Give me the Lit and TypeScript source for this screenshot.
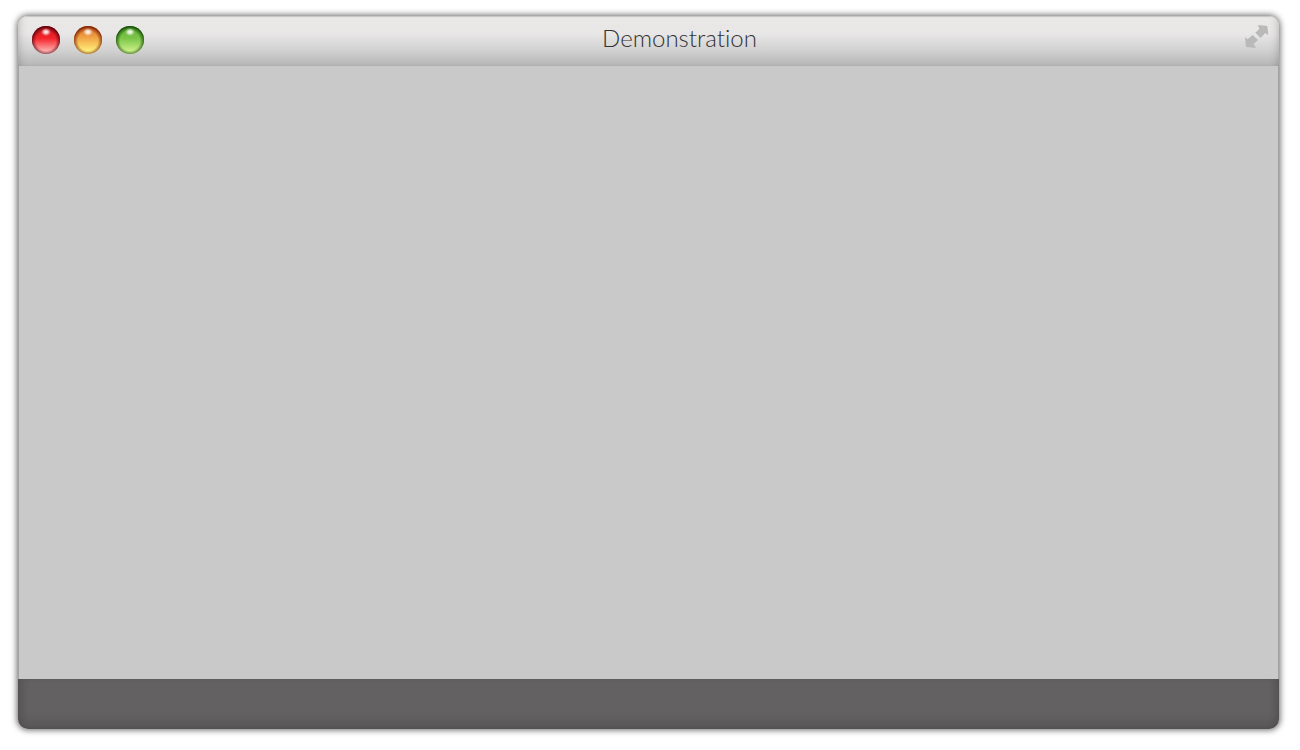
import { LitElement, html, css, svg } from "lit";
import { customElement } from "lit/decorators.js";

interface Orb {
  name: string;
  rim: string;
  top: string;
  middle: string;
  glow: string;
}

const orbs: Orb[] = [
  { name: "close", rim: "#4a0008", top: "#cc1420", middle: "#f5262c", glow: "#ffb0b0" },
  { name: "minimize", rim: "#6e1800", top: "#dc6a28", middle: "#f2a848", glow: "#fff07c" },
  { name: "zoom", rim: "#083c00", top: "#5fae30", middle: "#7cc64a", glow: "#ccf088" },
];

@customElement("app-root")
export class AppRoot extends LitElement {
  static styles = css`
    :host {
      display: block;
      box-sizing: border-box;
      height: 100vh;
      padding: 16px 21px 21px 18px;
      background: #fff;
      font-family: "Century Gothic", Lato, sans-serif;
    }
    .window {
      display: grid;
      grid-template-rows: 50px 1fr 50px;
      height: 100%;
      border-radius: 10px;
      overflow: hidden;
      background: #c9c9c9;
    }
    .frame {
      height: 100%;
      border-radius: 10px;
      box-shadow: 0 0 6px 1px rgba(0, 0, 0, 0.6);
    }
    .bar {
      display: flex;
      align-items: center;
      padding: 0 10px 0 13px;
      background: linear-gradient(#ebe9e7, #e8e6e6 36%, #d2d2d2 68%, #b5b5b5);
      box-shadow: inset 0 1px 1px #c4c4c4,
        inset 8px 0 10px -8px rgba(0, 0, 0, 0.25),
        inset -8px 0 10px -8px rgba(0, 0, 0, 0.25);
    }
    .controls {
      display: flex;
      gap: 12px;
      padding-bottom: 2px;
    }
    button {
      display: block;
      padding: 0;
      border: 0;
      background: none;
      cursor: pointer;
    }
    svg {
      display: block;
    }
    .title {
      flex: 1;
      margin: 0;
      padding: 0 30px 6px 0;
      text-align: center;
      font-size: 24px;
      line-height: 26px;
      font-weight: 300;
      font-variant-ligatures: none;
      color: #333;
    }
    .expand {
      margin-bottom: 10px;
    }
    .content {
      border: solid #a2a2a2;
      border-width: 0 1px;
    }
    .footer {
      background: #646162;
      box-shadow: inset 0 -8px 14px -4px rgba(0, 0, 0, 0.18),
        inset 8px 0 12px -8px rgba(0, 0, 0, 0.2),
        inset -8px 0 12px -8px rgba(0, 0, 0, 0.2);
    }
  `;

  private renderOrb(orb: Orb) {
    const id = orb.name;
    return html`<button type="button" aria-label=${id}>
      <svg width="30" height="30" viewBox="0 0 30 30">
        ${svg`
          <defs>
            <linearGradient id="body-${id}" x1="0" y1="0" x2="0" y2="1">
              <stop offset="0" stop-color=${orb.top}/>
              <stop offset=".45" stop-color=${orb.middle}/>
              <stop offset=".9" stop-color=${orb.glow}/>
            </linearGradient>
            <radialGradient id="rim-${id}" cx=".5" cy=".53" r=".53">
              <stop offset=".66" stop-color=${orb.rim} stop-opacity="0"/>
              <stop offset=".87" stop-color=${orb.rim} stop-opacity=".5"/>
              <stop offset="1" stop-color=${orb.rim}/>
            </radialGradient>
            <radialGradient id="shine-${id}">
              <stop offset="0" stop-color="#fff"/>
              <stop offset=".35" stop-color="#fff" stop-opacity=".75"/>
              <stop offset="1" stop-color="#fff" stop-opacity="0"/>
            </radialGradient>
          </defs>
          <circle cx="15" cy="15" r="14" fill="url(#body-${id})"/>
          <circle cx="15" cy="15" r="14" fill="url(#rim-${id})"/>
          <ellipse cx="15" cy="7" rx="5" ry="4" fill="url(#shine-${id})"/>
        `}
      </svg>
    </button>`;
  }

  render() {
    return html`
      <div class="frame">
        <main class="window">
          <header class="bar">
            <div class="controls">${orbs.map((orb) => this.renderOrb(orb))}</div>
            <h1 class="title">Demonstration</h1>
            <button class="expand" type="button" aria-label="Full screen">
              <svg width="25" height="25" viewBox="0 0 75 75" fill="#b9b9b9">
                <path d="M42 3L70 6L73 34L64 27L50 42L34 26L46 15Z" />
                <path d="M3 40L11 46L26 33L42 48L29 60L36 72L6 69Z" />
              </svg>
            </button>
          </header>
          <section class="content"></section>
          <footer class="footer"></footer>
        </main>
      </div>
    `;
  }
}
